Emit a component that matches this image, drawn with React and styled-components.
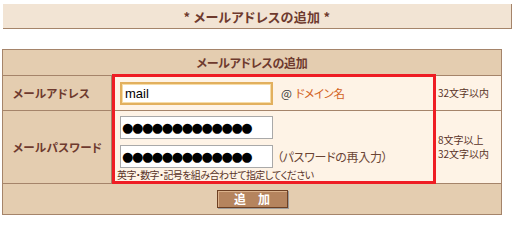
import React from "react";
import styled, { createGlobalStyle } from "styled-components";

const Global = createGlobalStyle`
  html, body { margin: 0; padding: 0; background: #ffffff; }
  body { font-family: "Noto Sans CJK JP", "Noto Sans", sans-serif; }
  * { box-sizing: border-box; }
`;

const Page = styled.div`
  padding: 4px 0 0 2px;
  width: 514px;
  height: 218px;
  overflow: hidden;
`;

const TitleBar = styled.div`
  margin-left: 1px;
  width: 509px;
  height: 25px;
  background: #f2e4d4;
  border-right: 1px solid #a5846a;
  border-bottom: 1px solid #a5846a;
  display: flex;
  align-items: center;
  justify-content: center;
  color: #6e3a2e;
  font-size: 13px;
  font-weight: bold;
  font-feature-settings: "palt";
  letter-spacing: 0.3px;
`;

const Table = styled.div`
  margin-top: 20px;
  width: 500px;
  display: grid;
  grid-template-columns: 108px 322px 66px;
  grid-template-rows: 25px 34px 72px 30px;
  gap: 1px;
  background: #a5846a;
  border: 1px solid #a5846a;
`;

const HeaderCell = styled.div`
  grid-column: 1 / 4;
  background: #e4cdb0;
  display: flex;
  align-items: center;
  justify-content: center;
  color: #6e3a2e;
  font-size: 12px;
  font-weight: bold;
  font-feature-settings: "palt";
  letter-spacing: -0.3px;
`;

const LabelCell = styled.div`
  background: #e4cdb0;
  display: flex;
  align-items: center;
  padding-left: 10px;
  color: #6e3a2e;
  font-size: 11.5px;
  font-weight: bold;
  font-feature-settings: "palt";
  letter-spacing: 0.3px;
`;

const ValueCell = styled.div`
  grid-column: 2;
  background: #fef3e6;
  display: flex;
  flex-direction: ${(p) => (p.$stack ? "column" : "row")};
  align-items: ${(p) => (p.$stack ? "flex-start" : "center")};
  justify-content: flex-start;
  gap: ${(p) => (p.$stack ? "6px" : "0")};
  padding: ${(p) => (p.$stack ? "5px 0 0 5px" : "0 0 0 8px")};
`;

const NoteCell = styled.div`
  background: #fef3e6;
  display: flex;
  flex-direction: column;
  justify-content: center;
  padding-left: 3px;
  color: #5a3428;
  font-size: 10px;
  font-feature-settings: "palt";
`;

const NoteLine = styled.span`
  display: block;
  line-height: 14px;
`;

const FieldRow = styled.div`
  display: flex;
  align-items: center;
  margin-left: ${(p) => p.$indent || 0}px;
`;

const TextInput = styled.input`
  width: 153px;
  height: 23px;
  margin: 0;
  background: #ffffff;
  color: #000000;
  font-family: ${(p) =>
    p.$dots ? `"DejaVu Sans", sans-serif` : `"Liberation Sans", Arial, sans-serif`};
  font-size: ${(p) => (p.$dots ? "13px" : "13px")};
  letter-spacing: ${(p) => (p.$dots ? "-1.4px" : "0")};
  border: ${(p) => (p.$focus ? "2px solid #e2b05e" : "1px solid #a9a9a9")};
  box-shadow: ${(p) => (p.$focus ? "inset 0 0 0 1px #f6dca8" : "none")};
  outline: none;
  padding: 0 0 0 ${(p) => (p.$dots ? "1px" : "3px")};
`;

const Aside = styled.span`
  margin-left: ${(p) => p.$gap || 6}px;
  color: ${(p) => p.$color || "#6a4434"};
  font-size: ${(p) => p.$size || 12}px;
  letter-spacing: ${(p) => p.$ls || 0}px;
  font-feature-settings: "palt";
`;

const DomainLink = styled.span`
  margin-left: 4px;
  color: #d2621e;
`;

const Hint = styled.div`
  margin-top: -5px;
  color: #5a3428;
  font-size: 10px;
  line-height: 12px;
  letter-spacing: -0.6px;
  font-feature-settings: "palt";
`;

const ButtonCell = styled.div`
  grid-column: 1 / 4;
  background: #e4cdb0;
  display: flex;
  align-items: center;
  justify-content: center;
  padding-bottom: 1px;
`;

const Button = styled.button`
  width: 71px;
  height: 18px;
  padding: 0;
  background: #b5845e;
  border: 1px solid #6d3f22;
  box-shadow: inset 1px 1px 0 #dcb38c, 1px 1px 0 #9c9c9c;
  color: #ffffff;
  font-family: "Noto Sans CJK JP", sans-serif;
  font-size: 12px;
  font-weight: bold;
  line-height: 16px;
  letter-spacing: 0;
`;

const Highlight = styled.div`
  grid-column: 2;
  grid-row: 2 / 4;
  margin: -2px -2px -1px 0;
  border: 3px solid #ee1d24;
  pointer-events: none;
`;

export default function App() {
  return (
    <>
      <Global />
      <Page>
        <TitleBar>* メールアドレスの追加 *</TitleBar>
        <Table>
          <HeaderCell>メールアドレスの追加</HeaderCell>

          <LabelCell style={{ gridRow: 2 }}>メールアドレス</LabelCell>
          <ValueCell style={{ gridRow: 2 }}>
            <TextInput $focus defaultValue="mail" />
            <Aside $gap={8} $color="#3a3a3a" $size={11.5} $ls={-0.4}>
              @<DomainLink>ドメイン名</DomainLink>
            </Aside>
          </ValueCell>
          <NoteCell style={{ gridRow: 2 }}>
            <NoteLine>32文字以内</NoteLine>
          </NoteCell>

          <LabelCell style={{ gridRow: 3 }}>メールパスワード</LabelCell>
          <ValueCell $stack style={{ gridRow: 3 }}>
            <FieldRow $indent={3}>
              <TextInput $dots readOnly value="●●●●●●●●●●●●●" />
            </FieldRow>
            <FieldRow $indent={3}>
              <TextInput $dots readOnly value="●●●●●●●●●●●●●" />
              <Aside $gap={4} $ls={-0.3}>（パスワードの再入力）</Aside>
            </FieldRow>
            <Hint>英字・数字・記号を組み合わせて指定してください</Hint>
          </ValueCell>
          <NoteCell style={{ gridRow: 3 }}>
            <NoteLine>8文字以上</NoteLine>
            <NoteLine>32文字以内</NoteLine>
          </NoteCell>

          <Highlight />

          <ButtonCell>
            <Button type="button">追　加</Button>
          </ButtonCell>
        </Table>
      </Page>
    </>
  );
}
